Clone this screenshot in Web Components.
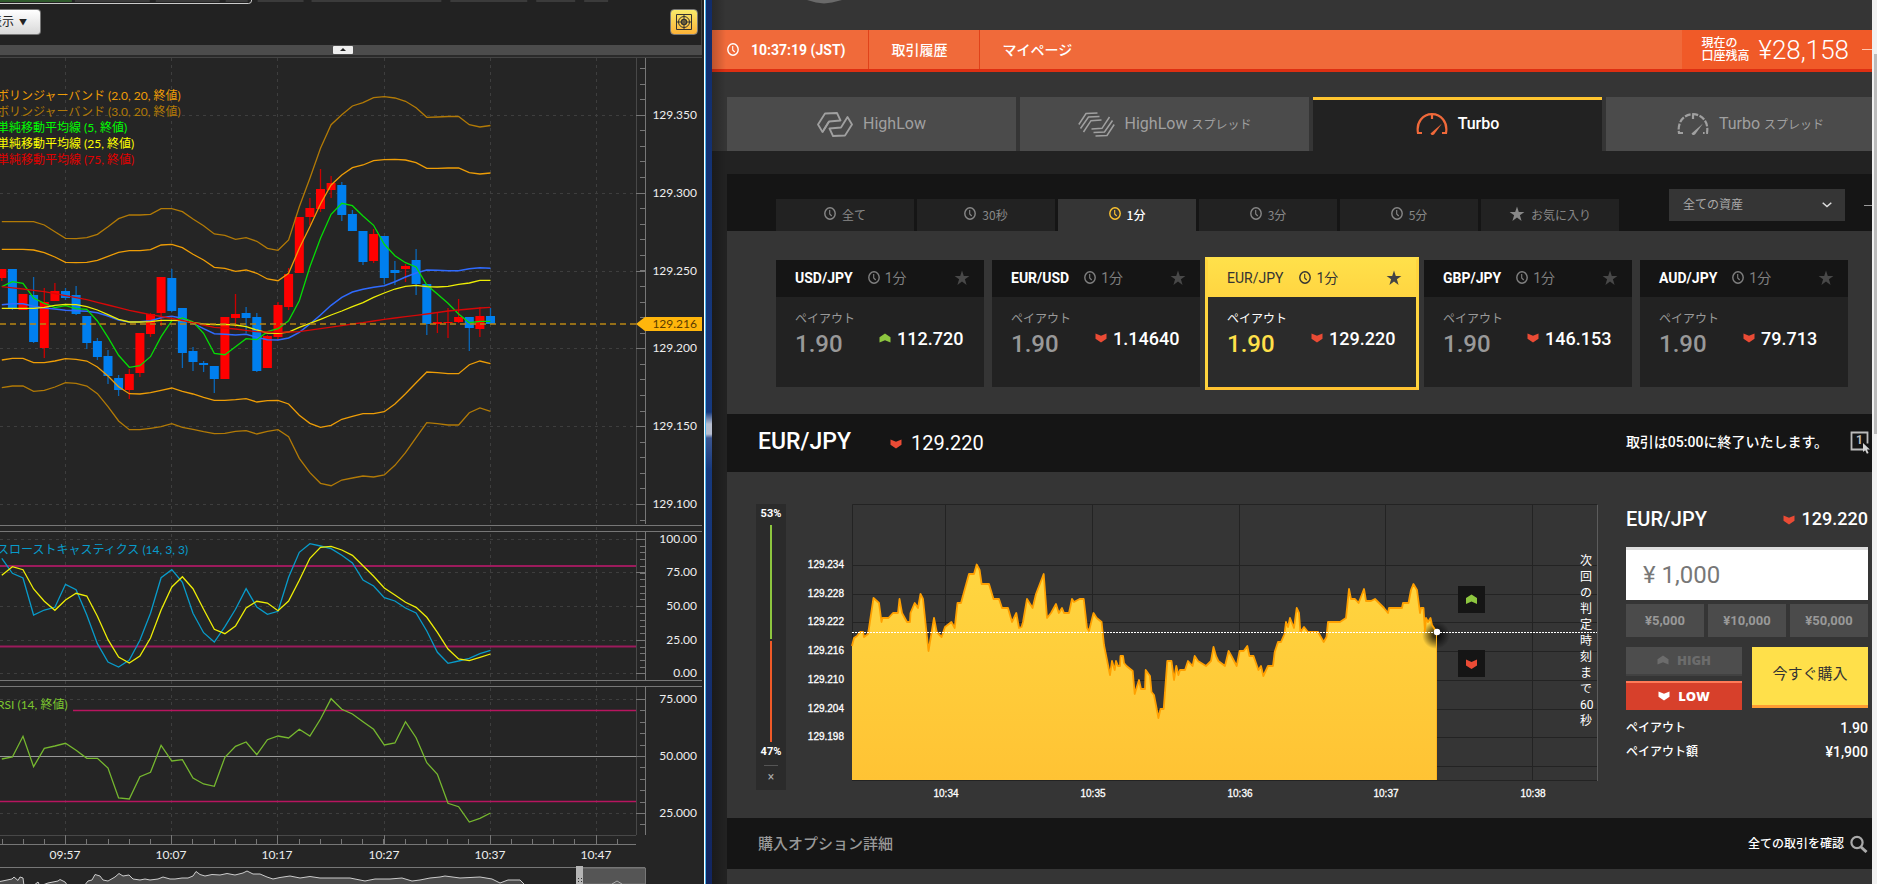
<!DOCTYPE html>
<html lang="ja">
<head>
<meta charset="utf-8">
<title>Turbo - EUR/JPY</title>
<style>
  * {
    box-sizing: border-box;
  }

  body {
    margin: 0;
    background: #222;
    color: #fff;
    font-family: Roboto, "Noto Sans CJK JP", sans-serif;
    overflow: hidden;
  }

  .desktop {
    display: grid;
    grid-template-columns: minmax(0, 702fr) 10px minmax(0, 1160fr) 5px;
    height: 100vh;
    overflow: hidden;
  }
</style>
</head>
<body>
<div class="desktop">
  <chart-window></chart-window>
  <window-edge></window-edge>
  <trade-app>
    <nav-bar balance="¥28,158">
      <nav-item icon="clock" strong>10:37:19 (JST)</nav-item>
      <nav-item>取引履歴</nav-item>
      <nav-item>マイページ</nav-item>
    </nav-bar>
    <mode-tabs>
      <mode-tab icon="highlow" name="HighLow"></mode-tab>
      <mode-tab icon="spread" name="HighLow" sub="スプレッド"></mode-tab>
      <mode-tab icon="turbo" name="Turbo" active></mode-tab>
      <mode-tab icon="turbospread" name="Turbo" sub="スプレッド"></mode-tab>
    </mode-tabs>
    <filter-bar>
      <time-tab icon="clock">全て</time-tab>
      <time-tab icon="clock">30秒</time-tab>
      <time-tab icon="clock" active>1分</time-tab>
      <time-tab icon="clock">3分</time-tab>
      <time-tab icon="clock">5分</time-tab>
      <time-tab icon="star">お気に入り</time-tab>
    </filter-bar>
    <asset-list>
      <asset-card pair="USD/JPY" price="112.720" dir="up"></asset-card>
      <asset-card pair="EUR/USD" price="1.14640" dir="down"></asset-card>
      <asset-card pair="EUR/JPY" price="129.220" dir="down" active></asset-card>
      <asset-card pair="GBP/JPY" price="146.153" dir="down"></asset-card>
      <asset-card pair="AUD/JPY" price="79.713" dir="down"></asset-card>
    </asset-list>
    <asset-title pair="EUR/JPY" price="129.220">取引は05:00に終了いたします。</asset-title>
    <trade-panel>
      <sentiment-bar high="53" low="47"></sentiment-bar>
      <rate-chart>次回の判定時刻まで60秒</rate-chart>
      <order-form pair="EUR/JPY" price="129.220"></order-form>
    </trade-panel>
    <detail-bar>購入オプション詳細</detail-bar>
  </trade-app>
  <page-scroll></page-scroll>
</div>

<script>
class BaseElement extends HTMLElement {
  constructor() {
    super();
    this.attachShadow({ mode: "open" });
  }

  connectedCallback() {
    const template = document.createElement("template");
    template.innerHTML = `
      <style>
        * { box-sizing: border-box; }
        :host { display: block; }
        button, input, select { font-family: inherit; border-radius: 0; margin: 0; }
        a { color: inherit; text-decoration: none; }
        svg { display: block; }
        ${this.getStyles()}
      </style>
      ${this.getMarkup()}
    `;
    this.shadowRoot.appendChild(template.content.cloneNode(true));
  }

  attr(name) {
    return this.getAttribute(name) || "";
  }

  getStyles() { return ""; }
  getMarkup() { return "<slot></slot>"; }
}

/* ---------- icons ---------- */

const ICONS = {
  clock: [12, 13, `<ellipse cx="6" cy="6.5" rx="5.2" ry="5.7" fill="none" stroke="currentColor" stroke-width="1.4"/><path d="M5.7 3v4l2 2" fill="none" stroke="currentColor" stroke-width="1.1"/>`],
  star: [16, 16, `<path d="M8 .6l1.8 5.3h5.6l-4.5 3.4 1.7 5.6L8 11.6l-4.6 3.3 1.7-5.6L.6 5.900h5.600z" fill="currentColor"/>`],
  up: [12, 10, `<path d="M.5 4.2 6 .4l5.500 3.800v5.400L6 7.200.5 9.600z" fill="currentColor"/>`],
  down: [12, 10, `<path d="M.5.4 6 2.800 11.500.4v5.400L6 9.600.5 5.800z" fill="currentColor"/>`],
  highlow: [36, 25, `<g fill="none" stroke="currentColor" stroke-width="1.8" stroke-linejoin="round"><path d="M5.500 20 1 12.500 8 1.500 20 1l3.500 7.500-11.500 1z"/><path d="M5.500 20 12 9.500"/><path d="M30.500 5 35 12.500 28 23.500 16 24l-3.500-7.500 11.500-1z"/></g>`],
  spread: [37, 25, `<g fill="none" stroke="currentColor" stroke-width="1.5"><path d="M.8 12.500 8 1.600 19.500.9"/><path d="M2.500 16.500 10.500 5 21.500 4.400"/><path d="M5.500 20 13 8.700 23.500 8.100"/><path d="M36.200 12.500 29 23.400 17.500 24.100"/><path d="M34.500 8.500 26.500 20 15.500 20.600"/><path d="M31.500 5 24 16.300 13.500 16.900"/></g>`],
  turbo: [32, 22, `<g fill="none" stroke="currentColor" stroke-width="2.2"><path d="M6 20H2C0 9 7 1.200 16 1.200S32 9 30 20h-4"/><path d="M16 1.500V6"/></g><path d="M14.500 20.500 26 10.500 18 21.500q-2.500 1.500-3.500-1z" fill="currentColor"/>`],
  turbospread: [32, 22, `<g fill="none" stroke="currentColor" stroke-width="2.2"><path d="M6 20H2C0 9 7 1.200 16 1.200S32 9 30 20h-4" stroke-dasharray="6 1.500"/><path d="M16 1.500V6"/></g><path d="M14.500 20.500 26 10.500 18 21.500q-2.500 1.500-3.500-1z" fill="currentColor"/>`],
  search: [18, 18, `<circle cx="7" cy="7.500" r="5.600" fill="none" stroke="currentColor" stroke-width="2.2"/><path d="M11 12l5.500 5" stroke="currentColor" stroke-width="3"/>`],
  chevron: [10, 6, `<path d="M.7.7 5 4.500 9.300.7" fill="none" stroke="currentColor" stroke-width="1.5"/>`],
  target: [16, 16, `<g fill="none" stroke="currentColor"><path d="M.5.5h15v15H.5z M8 0v16M0 8h16"/><circle cx="8" cy="8" r="5.500"/><circle cx="8" cy="8" r="2.500" stroke-width="1.5"/></g>`],
  oneclick: [22, 23, `<path d="M13 18.500H1.500v-17h16v11" fill="none" stroke="currentColor" stroke-width="1.8"/><path d="M13 12v9l2.200-1.800 1.700 3.500 1.700-.8-1.700-3.400h3z" fill="#d5d5d5"/>`]
};

class TradeIcon extends BaseElement {
  getStyles() {
    return `:host { flex: none; display: inline-block; }`;
  }

  getMarkup() {
    const [w, h, body] = ICONS[this.attr("name")];
    return `<svg width="${w}" height="${h}" viewBox="0 0 ${w} ${h}" aria-hidden="true">${body}</svg>`;
  }
}
customElements.define("trade-icon", TradeIcon);

/* ---------- left window: candle chart ---------- */

class ChartToolbar extends BaseElement {
  getStyles() {
    return `
      :host { height: 57px; background: #2a2a2a; }
      .tools {
        position: relative;
        display: flex;
        justify-content: space-between;
        align-items: flex-start;
        height: 45px;
        padding: 9px 3px 0 0;
        background: #222;
        border-right: 1px solid #444;
      }
      .tray {
        position: absolute;
        inset: 0 0 auto 0;
        width: 100%;
      }
      button {
        height: 26px;
        border: 1px solid #777;
        color: #222;
      }
      .show {
        display: flex;
        align-items: center;
        justify-content: flex-end;
        gap: 5px;
        width: 41px;
        padding: 0 13px 0 0;
        border-left: 0;
        border-radius: 0 4px 4px 0;
        background: linear-gradient(#fff, #d8d8d8);
        font-size: 12px;
        line-height: 24px;
        white-space: nowrap;
        overflow: hidden;
      }
      .show small { font-size: 8px; }
      .aim {
        display: grid;
        place-items: center;
        width: 28px;
        padding: 0;
        border-radius: 4px;
        background: linear-gradient(#f7ea6b, #fdb338);
        color: #333;
      }
      .strip {
        display: flex;
        height: 10px;
        padding-left: 47.4%;
        background: #4c4c4c;
      }
      .fold {
        width: 20px;
        height: 8px;
        margin-top: 1px;
        padding: 0;
        border: 0;
        border-radius: 1px;
        background: #eee;
        display: grid;
        place-items: center;
      }
    `;
  }

  getMarkup() {
    return `
      <div class="tools">
        <svg class="tray" height="5" viewBox="0 0 702 5" preserveAspectRatio="none">
          <path d="M0 1h72" stroke="#2f5a2c" stroke-width="2"/>
          <path d="M75 1h75M156 1h64M226 1h22M258 1h46M312 1h130M451 1h77M537 1h39M585 1h24" stroke="#555" stroke-width="1"/>
          <path d="M0 3.500h249q3 0 3-3.500" fill="none" stroke="#ccc"/>
        </svg>
        <button class="show">表示<small>▼</small></button>
        <button class="aim" aria-label="十字線"><trade-icon name="target"></trade-icon></button>
      </div>
      <div class="strip">
        <button class="fold" aria-label="折りたたむ"><svg width="6" height="4"><path d="M0 3l3-3 3 3z" fill="#222"/></svg></button>
      </div>
    `;
  }
}
customElements.define("chart-toolbar", ChartToolbar);

// bar 6 sits on the 09:57 line, ten bars per grid column
const barX = i => +(65.5 + (i - 6) * 10.625).toFixed(1);

const BANDS = {
  upper3: "221.7 221.7 221.7 221.7 225 231.7 238.3 238.7 237.7 234.3 226.7 218.7 215 215 214.3 208.7 208.7 211.7 219 225.7 234 235.3 239.3 237.7 241.3 248.3 250.3 240 206.7 178.3 148.3 124.7 114.7 106 102.7 97.7 96.7 98 101.3 107.7 117.3 117 116.5 116.5 124.7 127 125.5",
  upper2: "249.3 249.3 249.3 250 252.7 257 262.3 262.7 262.3 260.3 256.3 252.3 250.7 250.7 249.7 245 244.3 247.7 254.3 260 267.3 268.3 271.3 270 273.3 279 280.7 273.3 248.3 226.7 204 185 175 167.7 165 160.7 159.7 159.3 160 162.7 168.3 168.3 168 168 172.7 174 173",
  lower2: "360 358.3 358.3 362.7 362.7 361 358.7 359.3 361 367 376 386.7 393.7 394 392.7 390.3 388 391.3 394 397.3 400.3 400.3 399.7 398.7 402 400.7 400.3 404 415.3 423.3 427.3 425.3 419.3 416.3 413.7 413.7 411.7 404 393.7 382.7 372 372.7 373.7 373.7 364.7 361 363.7",
  lower3: "387.7 386 386 391.3 390.3 387 382.7 383.3 386 393.7 406.7 421 429.7 429.7 428.3 426.7 423.7 427.3 429.3 431.7 433.7 433.3 431.3 430.7 434 431.3 429.7 436.7 458.3 472.7 483.3 485.7 480 478 476 477 475 465.3 452.7 437.7 422.7 423.7 425 425 412.7 408 411.3",
  sma5: "286.7 281.7 283.3 298 303.3 307.7 305.7 308.7 309.3 321 337.3 355.3 367.3 365.7 356.7 336.7 320.7 318 321.7 333.3 353.3 354.7 346.7 338.7 339.7 331.7 328.7 320.7 300.7 266.7 238.3 214.3 203.3 205.7 216 225.3 244.3 255.7 262.7 267 285 294 303.3 314 322.7 321.3 321.3",
  sma25: "308.3 308.3 308.3 308.3 307.3 305.3 304.3 304.7 306.7 310 314.7 319.3 322 322 321.7 320.3 320.3 320.7 322.7 324 324.7 324.3 325 326.7 330 333 333.3 332 327.3 323.3 319.3 315 311 306.7 302.7 297.3 293 289 286.3 285.3 286.7 287 286.3 284.3 283 280.3 280.3",
  mid: "304.7 303.7 303.7 306.3 308 309 310.3 310.7 311.3 312.7 316 320 322 321.7 320.7 317.7 316.3 318.3 323.3 328.7 333.7 334.3 335 334.3 337.3 339.7 340 338 332.3 324 315 305.3 297.3 292 289.3 287.3 285.7 281.7 277 273 270 270.3 270.7 270.7 268.7 267.7 268.3",
  sma75: "286.7 287.8 289 290.3 291.7 293.7 295.7 297.7 299.7 302.3 305 307.7 310.3 312.5 314.7 316.5 318.3 320.5 322.7 325 327.3 328.2 329 330.3 331.7 332 332.3 332 331.7 330.2 328.7 327.2 325.7 324 322.7 321 319.3 318 316.7 315.3 314 312.5 311 310 309 308 307.3"
};

const OSCILLATORS = {
  k: "558.3 573.3 578 615 610 607.3 584.3 589.7 615 643.7 662 667 660 640.3 613.3 577.7 569.7 582.3 613.3 632.7 642 626.7 609.3 588.7 607 614.3 611.3 577.3 552.3 543.7 546 548.7 555.3 563 580 586 597.7 601 608 613 631 652.3 663.3 661 658.3 653.7 650.3",
  d: "575.3 566.7 569.7 589 601.3 610.3 600 593.3 596 616.3 639.7 657 663 656 638 610 587 576.7 588.7 609.3 629.3 633.7 626 608 601.3 603 610.7 601 580.3 558.3 547.3 546.3 550 555.3 565.7 576.3 588 595 602.3 607.3 617.3 632.3 649 659 660.7 657.3 654",
  rsi: "759 757 736.3 766.7 748.3 746 743.3 750.3 758.3 758.3 768 798 799 776.7 772.3 745.3 761 759.7 778 784 786.3 757.3 746.3 742 754.7 739.7 736 738 729.3 736 719 698.7 709.3 714 721.7 729.3 745 743 721.7 737.7 762.7 774.3 803.3 806.7 822 818.3 813"
};

// up?, high, top, bottom, low
const CANDLES = [
  [1,269,269,278,281],[0,269,269,308,310],[1,294,294,310,310],[0,277,295,342,343],[1,288,302,348,358],
  [1,283,291,301,301],[0,288,291,298,300],[0,286,295,314,315],[0,316,316,343,349],[0,338,341,357,360],
  [0,350,356,376,384],[0,375,378,390,396],[1,369,374,390,399],[1,333,333,373,377],[1,313,314,334,337],
  [1,277,277,313,326],[0,269,278,311,312],[0,308,308,353,368],[0,347,351,362,371],[0,361,363,365,372],
  [0,366,366,379,393],[1,317,317,379,379],[1,294,314,318,327],[0,307,313,318,333],[0,313,317,371,372],
  [1,335,336,368,368],[1,302,305,337,340],[1,268,274,307,310],[1,217,217,273,273],[1,198,208,217,225],
  [1,169,189,209,212],[1,176,183,190,198],[0,182,185,215,221],[0,210,214,231,231],[0,231,231,262,265],
  [1,229,234,261,263],[0,236,236,278,284],[0,261,270,273,285],[1,264,266,269,282],[0,249,260,284,295],
  [0,284,284,324,335],[1,312,322,324,333],[1,308,322,323,338],[1,299,317,322,323],[0,317,317,328,351],
  [1,307,316,329,337],[0,308,316,324,324]
];

const OVERVIEW = "0 881.5 12 879 14 877 18 880.5 20 877 23 878 24 886 33 886 38 882 40 886 48 883 58 881 60 879.5 65 882 68 886 84 886 88 881 92 880 95 874.5 100 876 103 880 108 881 115 877 119 873.5 123 876 129 875 133 879 140 880 145 879 150 880 158 879 163 877 170 879 175 879 182 878 188 878 193 876 196 871.5 200 874.5 205 876 212 874.5 220 875 227 873.5 235 875 243 873 247 871 253 874 260 874 267 877 273 879 280 877.5 290 876 300 878 310 876.5 320 878 335 878 350 878 365 881 375 879 390 879 402 878 412 881 420 880 430 878 440 877 445 876 460 878 480 877 492 879 500 883 508 880 520 880 526 886";

class IndicatorChart extends BaseElement {
  getStyles() {
    return `
      :host { font: 12px/16px Lato, "Noto Sans CJK JP", sans-serif; }
      svg { width: 100%; height: auto; background: #252525; }
      text { fill: #eee; }
      .axis text { text-anchor: end; }
      .time text { text-anchor: middle; }
    `;
  }

  line(values, color, width = 1.3) {
    const points = values.split(" ").map((y, i) => `${barX(i)},${y}`).join(" ");
    return `<polyline points="${points}" fill="none" stroke="${color}" stroke-width="${width}"/>`;
  }

  ticks(from, to, step) {
    let d = "";
    for (let y = from; y <= to; y += step) d += `M640 ${Math.round(y) + 0.5}h5`;
    return d;
  }

  getMarkup() {
    const grid = [115, 193, 271, 348, 426, 504, 539, 572, 606, 640, 673, 699, 813];
    const columns = [65, 171, 277, 384, 490, 596];
    const labels = [
      ["129.350", 115], ["129.300", 193], ["129.250", 271], ["129.200", 348], ["129.150", 426], ["129.100", 504],
      ["100.00", 539], ["75.00", 572], ["50.00", 606], ["25.00", 640], ["0.00", 673],
      ["75.000", 699], ["50.000", 756], ["25.000", 813]
    ];
    const times = ["09:57", "10:07", "10:17", "10:27", "10:37", "10:47"];
    let minor = "";
    for (let x = 1.5; x < 636; x += 21.22) minor += `M${Math.round(x) + 0.5} 839v5`;

    return `
      <svg viewBox="0 57 702 827" role="img" aria-label="EUR/JPY">
        <path d="M0 57.500h702" stroke="#444"/>
        <path d="${grid.map(y => `M0 ${y}.5h636`).join("")}${columns.map(x => `M${x}.5 58v778`).join("")}"
          stroke="#3e3e3e" stroke-dasharray="3 4" fill="none"/>
        <g>
          ${CANDLES.map(([up, high, top, bottom, low], i) => `
            <path d="M${barX(i)} ${high}V${low}" stroke="${up ? "#c00" : "#0a67b8"}" stroke-width="1.3"/>
            <rect x="${barX(i) - 4.5}" y="${top}" width="9" height="${bottom - top}" fill="${up ? "#f00" : "#007fef"}"/>`).join("")}
        </g>
        ${this.line(BANDS.mid, "#2f6bff", 1.5)}
        ${this.line(BANDS.upper3, "#b27a06")}
        ${this.line(BANDS.lower3, "#b27a06")}
        ${this.line(BANDS.upper2, "#ee9d06")}
        ${this.line(BANDS.lower2, "#ee9d06")}
        ${this.line(BANDS.sma5, "#05dd05")}
        ${this.line(BANDS.sma25, "#eeee05")}
        ${this.line(BANDS.sma75, "#d60808")}
        <path d="M0 324h636" stroke="#b98613" stroke-width="1.5" stroke-dasharray="6 4"/>

        <g>
          <text x="-3" y="100" style="fill:#ee9d06">ボリンジャーバンド (2.0, 20, 終値)</text>
          <text x="-3" y="116" style="fill:#b27a06">ボリンジャーバンド (3.0, 20, 終値)</text>
          <text x="-3" y="132" style="fill:#0f0">単純移動平均線 (5, 終値)</text>
          <text x="-3" y="148" style="fill:#ff0">単純移動平均線 (25, 終値)</text>
          <text x="-3" y="164" style="fill:#e00000">単純移動平均線 (75, 終値)</text>
        </g>

        <path d="M0 566h636M0 646.500h636" stroke="#9c1b5c" stroke-width="2"/>
        ${this.line(OSCILLATORS.k, "#089bca")}
        ${this.line(OSCILLATORS.d, "#eeee05")}
        <text x="-3" y="554" style="fill:#089bca">スローストキャスティクス (14, 3, 3)</text>

        <path d="M73 710.500h563M0 801.500h636" stroke="#b8155f" stroke-width="1.5"/>
        <path d="M0 756.500h645" stroke="#999"/>
        ${this.line(OSCILLATORS.rsi, "#76b82f")}
        <text x="-3" y="709" style="fill:#7cc62f">RSI (14, 終値)</text>

        <path d="M636.500 58V524M636.500 532V680M636.500 687V835M0 835.500h636" stroke="#484848" fill="none"/>
        <path d="M645.500 58V524M645.500 532V680M645.500 687V835M0 844.500h636M0 525.500h702M0 531.500h702M0 680.500h702M0 686.500h702M0 867.500h645"
          stroke="#777" fill="none"/>
        <path d="${this.ticks(68, 522, 15.57)}${this.ticks(539, 675, 6.72)}${this.ticks(699, 830, 11.4)}${minor}
          ${labels.map(([, y]) => `M636 ${y}.5h9`).join("")}${columns.map(x => `M${x}.5 835v9`).join("")}" stroke="#777" fill="none"/>
        <path d="M636 324l9-7h57v14h-57z" fill="#ffb60c"/>
        <g class="axis">
          ${labels.map(([t, y]) => `<text x="697" y="${y + 4}">${t}</text>`).join("")}
          <text x="697" y="328" style="fill:#5b3b00">129.216</text>
        </g>
        <g class="time">
          ${times.map((t, i) => `<text x="${columns[i]}" y="859">${t}</text>`).join("")}
        </g>

        <polygon points="0,886 ${OVERVIEW}" fill="#4a4a4a"/>
        <polyline points="${OVERVIEW}" fill="none" stroke="#ccc"/>
        <path d="M577 868h68.500v16H577z" fill="#555" stroke="#777"/>
        <path d="M612 884l5-3 5 3" fill="none" stroke="#aaa"/>
        <path d="M576 866h7v18h-7z" fill="#b5b5b5"/>
        <path d="M578.500 878v6M581.500 878v6" stroke="#333" stroke-dasharray="1 2"/>
      </svg>
    `;
  }
}
customElements.define("indicator-chart", IndicatorChart);

class ChartWindow extends BaseElement {
  getStyles() {
    return `:host { background: #252525; font-family: Lato, "Noto Sans CJK JP", sans-serif; overflow: hidden; }`;
  }

  getMarkup() {
    return `<chart-toolbar></chart-toolbar><indicator-chart></indicator-chart>`;
  }
}
customElements.define("chart-window", ChartWindow);

class WindowEdge extends BaseElement {
  getStyles() {
    return `
      :host {
        background:
          linear-gradient(90deg, #222 0 2px, #fff 2px 3px, #49b4ee 3px 4px, transparent 4px),
          linear-gradient(transparent 412px, #b8bfd0 424px 434px, #3a5590 438px, transparent 470px),
          linear-gradient(#112c6a, #163a80 50%, #12255f);
      }
    `;
  }

  getMarkup() { return ""; }
}
customElements.define("window-edge", WindowEdge);

class PageScroll extends BaseElement {
  getStyles() {
    return `
      :host { background: #f1f1f1; padding: 54px 0 0 2px; }
      div { height: 380px; background: #bcbcbc; }
    `;
  }

  getMarkup() { return `<div></div>`; }
}
customElements.define("page-scroll", PageScroll);

/* ---------- right window: trading page ---------- */

class TradeApp extends BaseElement {
  getStyles() {
    return `
      :host { position: relative; overflow: hidden; background: #222; }
      header { height: 30px; background: #353535; }
      header svg { margin-left: 95px; }
      .shade {
        position: absolute;
        inset: 0 auto 0 0;
        width: 14px;
        background: linear-gradient(90deg, rgba(0, 0, 0, .22), transparent);
      }
      footer { height: 60px; margin-left: 15px; background: #353535; }
    `;
  }

  getMarkup() {
    return `
      <header><svg width="35" height="4"><path d="M0 0h35l-10 2.500-8 1-8-1z" fill="#6a6a6a"/></svg></header>
      <slot></slot>
      <footer></footer>
      <div class="shade"></div>
    `;
  }
}
customElements.define("trade-app", TradeApp);

class NavItem extends BaseElement {
  getStyles() {
    return `
      :host { display: flex; border-right: 1px solid #e0421a; }
      :host(:last-of-type) { border-right: 0; }
      a {
        display: flex;
        align-items: center;
        gap: 12px;
        padding: 0 31px 0 23px;
        font-size: 14px;
        line-height: 20px;
        font-weight: 500;
      }
      :host([strong]) a { font-weight: 700; padding: 0 22px 0 15px; }
    `;
  }

  getMarkup() {
    return `<a href="#">${this.attr("icon") ? `<trade-icon name="${this.attr("icon")}"></trade-icon>` : ""}<slot></slot></a>`;
  }
}
customElements.define("nav-item", NavItem);

class NavBar extends BaseElement {
  getStyles() {
    return `
      :host {
        display: flex;
        justify-content: space-between;
        height: 42px;
        background: #f06a3a;
        border-bottom: 3px solid #de2f12;
      }
      nav { display: flex; }
      .balance {
        display: flex;
        align-items: center;
        gap: 9px;
        padding-left: 19px;
        background: #f05a28;
      }
      .label { font-size: 12px; line-height: 13px; font-weight: 500; }
      .amount { font-size: 26px; line-height: 32px; font-weight: 300; }
      .menu { width: 10px; height: 1px; margin-left: 4px; background: #ffc6ae; }
    `;
  }

  getMarkup() {
    return `
      <nav><slot></slot></nav>
      <div class="balance">
        <span class="label">現在の<br>口座残高</span>
        <span class="amount">${this.attr("balance")}</span>
        <span class="menu"></span>
      </div>
    `;
  }
}
customElements.define("nav-bar", NavBar);

class ModeTabs extends BaseElement {
  getStyles() {
    return `
      :host {
        display: grid;
        grid-template-columns: repeat(4, minmax(0, 1fr));
        gap: 4px;
        padding: 25px 0 0 15px;
        margin-right: -23px;
        background: #353535;
      }
    `;
  }
}
customElements.define("mode-tabs", ModeTabs);

class ModeTab extends BaseElement {
  getStyles() {
    return `
      a {
        display: flex;
        align-items: center;
        justify-content: center;
        gap: 10px;
        height: 54px;
        background: #4b4b4b;
        color: #a0a0a0;
        font-size: 16px;
        line-height: 20px;
      }
      small { font-size: 12px; }
      :host([active]) a { background: #222; color: #fff; border-top: 3px solid #ffc52f; border-bottom: 3px solid #222; font-weight: 500; }
      :host([active]) trade-icon { color: #f0693a; }
    `;
  }

  getMarkup() {
    const sub = this.attr("sub") ? ` <small>${this.attr("sub")}</small>` : "";
    return `<a href="#"><trade-icon name="${this.attr("icon")}"></trade-icon><span>${this.attr("name")}${sub}</span></a>`;
  }
}
customElements.define("mode-tab", ModeTab);

class FilterBar extends BaseElement {
  getStyles() {
    return `
      :host {
        display: flex;
        justify-content: space-between;
        align-items: flex-end;
        height: 57px;
        margin: 23px 0 0 15px;
        padding-left: 49px;
        background: #151515;
      }
      .tabs { display: grid; grid-template-columns: repeat(6, minmax(0, 138px)); gap: 3px; }
      .assets { display: flex; align-items: center; gap: 19px; padding-bottom: 10px; }
      .box { display: grid; align-items: center; }
      .box > * { grid-area: 1 / 1; }
      .box trade-icon { justify-self: end; margin-right: 13px; color: #ddd; pointer-events: none; }
      select {
        appearance: none;
        width: 176px;
        height: 32px;
        padding: 0 14px;
        border: 0;
        background: #353535;
        color: #aaa;
        font-size: 12px;
      }
      .menu { width: 8px; height: 1px; background: #999; }
    `;
  }

  getMarkup() {
    return `
      <div class="tabs"><slot></slot></div>
      <div class="assets">
        <div class="box">
          <select aria-label="資産"><option>全ての資産</option></select>
          <trade-icon name="chevron"></trade-icon>
        </div>
        <span class="menu"></span>
      </div>
    `;
  }
}
customElements.define("filter-bar", FilterBar);

class TimeTab extends BaseElement {
  getStyles() {
    return `
      button {
        display: flex;
        align-items: center;
        justify-content: center;
        gap: 6px;
        width: 100%;
        height: 32px;
        padding: 0;
        border: 0;
        background: #222;
        color: #888;
        font: 12px/16px "Noto Sans CJK JP", sans-serif;
      }
      trade-icon { padding-bottom: 3px; }
      :host([active]) button { background: #353535; color: #fff; font-weight: 500; }
      :host([active]) trade-icon { color: #ffc52f; }
    `;
  }

  getMarkup() {
    return `<button><trade-icon name="${this.attr("icon")}"></trade-icon><span><slot></slot></span></button>`;
  }
}
customElements.define("time-tab", TimeTab);

class AssetList extends BaseElement {
  getStyles() {
    return `
      :host {
        display: grid;
        grid-template-columns: repeat(5, minmax(0, 1fr));
        gap: 8px;
        margin-left: 15px;
        padding: 29px 24px 27px 49px;
        background: #353535;
      }
    `;
  }
}
customElements.define("asset-list", AssetList);

class AssetCard extends BaseElement {
  getStyles() {
    return `
      article { background: #222; }
      header {
        display: flex;
        align-items: center;
        height: 37px;
        padding: 0 14px 2px 19px;
        background: #151515;
        color: #808080;
        font-size: 14px;
        line-height: 20px;
      }
      h3 { margin: 0 15px 0 0; color: #fff; font-size: 14px; font-weight: 700; }
      header trade-icon { margin-right: 5px; }
      .fav { margin: 0 0 0 auto; padding: 0; border: 0; background: none; color: #484848; display: flex; }
      .fav trade-icon { margin: 0; }
      .body {
        display: grid;
        grid-template-columns: 84px 1fr;
        height: 90px;
        padding: 13px 0 0 19px;
      }
      .payout { display: grid; align-content: start; color: #999; font-size: 12px; line-height: 18px; }
      .payout strong { font-size: 24px; line-height: 32px; font-weight: 500; }
      .price {
        display: flex;
        gap: 6px;
        align-items: center;
        height: 24px;
        margin-top: 16px;
        font-size: 18px;
        font-weight: 500;
      }
      .up { color: #8dc63f; }
      .down { color: #ea4b35; }

      :host([active]) article {
        margin: -3px;
        border: 3px solid #ffd53e;
        border-top-color: #ffe04a;
        border-bottom-color: #ffc331;
        background: #2b2b2b;
      }
      :host([active]) header { background: linear-gradient(#ffe04a, #ffd541); color: #333; }
      :host([active]) h3 { color: #333; font-weight: 400; margin-right: 16px; }
      :host([active]) .fav { color: #444; }
      :host([active]) .payout { color: #fff; }
      :host([active]) .payout strong { color: #ffe04a; }
    `;
  }

  getMarkup() {
    const dir = this.attr("dir");
    return `
      <article>
        <header>
          <h3>${this.attr("pair")}</h3>
          <trade-icon name="clock"></trade-icon><span>1分</span>
          <button class="fav" aria-label="お気に入り"><trade-icon name="star"></trade-icon></button>
        </header>
        <div class="body">
          <div class="payout"><span>ペイアウト</span><strong>1.90</strong></div>
          <div class="price"><trade-icon class="${dir}" name="${dir}"></trade-icon>${this.attr("price")}</div>
        </div>
      </article>
    `;
  }
}
customElements.define("asset-card", AssetCard);

class AssetTitle extends BaseElement {
  getStyles() {
    return `
      :host {
        display: flex;
        align-items: center;
        height: 58px;
        margin-left: 15px;
        padding: 0 0 2px 31px;
        background: #151515;
      }
      h2 { margin: 0 39px 0 0; font-size: 23px; line-height: 32px; font-weight: 500; }
      .down { color: #ea4b35; margin: 4px 9px 0 0; }
      .price { font-size: 20px; line-height: 24px; padding-top: 2px; }
      .closing { margin-left: auto; font-size: 14px; line-height: 20px; font-weight: 500; }
      button { display: grid; margin-left: 22px; padding: 0; border: 0; background: none; color: #bbb; }
      button > * { grid-area: 1 / 1; }
      button span { width: 19px; font-size: 12px; line-height: 19px; font-weight: 700; text-align: center; }
    `;
  }

  getMarkup() {
    return `
      <h2>${this.attr("pair")}</h2>
      <trade-icon class="down" name="down"></trade-icon>
      <span class="price">${this.attr("price")}</span>
      <span class="closing"><slot></slot></span>
      <button aria-label="ワンクリック"><trade-icon name="oneclick"></trade-icon><span>1</span></button>
    `;
  }
}
customElements.define("asset-title", AssetTitle);

class TradePanel extends BaseElement {
  getStyles() {
    return `
      :host {
        display: grid;
        grid-template-columns: 30px minmax(0, 1fr) 20px 242px;
        align-items: start;
        margin-left: 15px;
        padding: 32px 4px 14px 29px;
        background: #353535;
      }
      ::slotted(order-form) { grid-column: 4; }
    `;
  }
}
customElements.define("trade-panel", TradePanel);

class SentimentBar extends BaseElement {
  getStyles() {
    return `
      :host {
        display: grid;
        justify-items: center;
        grid-template-rows: 21px 217px 16px 30px;
        height: 286px;
        background: #2b2b2b;
        font-size: 11px;
        line-height: 19px;
        font-weight: 700;
      }
      .bar { display: grid; gap: 2px; width: 2px; }
      .bar i:first-child { background: #8dc63f; }
      .bar i:last-child { background: #f05a28; }
      button {
        align-self: start;
        width: 14px;
        margin-top: 7px;
        padding: 4px 0 0;
        border: 0;
        border-top: 1px solid #555;
        background: none;
        color: #aaa;
        font-size: 12px;
        line-height: 14px;
      }
    `;
  }

  getMarkup() {
    const high = this.attr("high");
    const low = this.attr("low");
    return `
      <span>${high}%</span>
      <div class="bar" style="grid-template-rows: ${high}fr ${low}fr"><i></i><i></i></div>
      <span>${low}%</span>
      <button>×</button>
    `;
  }
}
customElements.define("sentiment-bar", SentimentBar);

const RATES = "852,646 854,638 857,636 860,632 863,632 864,637 868,634 869,628 873.5,598 879,603 881.5,622 882.5,618 888.5,618 893,613 898,613 899.5,599 902,613 907,622 910,622 910.5,613 914.7,603 918,608 920.5,594 923,599 925.7,625 928.5,651 934,618 936.7,632 941.6,637 945,627 951.4,622 954.7,628 957.5,603 961,603 969,574 974,574 976.7,564.5 979.6,570 981.6,584 989,584 993.5,599 999,599 1002,608 1008,608 1012,622 1016.3,613 1019,628 1021.6,627 1023,622 1027,599 1032.6,608 1036,594 1043.7,574 1047,618 1051,613 1056,604 1058.8,613 1062,608 1064,613 1069,613 1072,599 1074,602 1079.6,599 1083.7,599 1087,628 1089,631 1093.5,613 1096.7,618 1101.6,622 1104,645 1108,665 1110,675 1112,661 1114.7,670 1116,661 1118,666 1120,666 1120.5,656 1123,656 1124,663 1126.5,666 1132.7,671 1134.7,694 1139,680 1141,689 1145,689 1145.7,670 1150,676 1151.5,692 1154,695 1156.5,708 1158.4,718 1160.5,709 1163.7,709 1167.3,661 1171.5,661 1174,680 1176.3,666 1178.4,675 1180,670 1185,670 1188,661 1192.6,666 1194.7,656 1198,661 1206,666 1211,661 1213.5,647 1216,656 1218.4,661 1225,666 1228.6,651 1231.4,656 1236.7,666 1239.6,651 1243.7,651 1247.3,646 1249.4,656 1253.5,656 1258.4,670 1261,666 1263.3,676 1268,666 1273,666 1274.7,652 1278,642 1281,642 1284.5,634 1286,622 1288,627 1290,618 1294,628 1296.7,608 1299,613 1300.4,632 1304,627 1308,632 1318,632 1323.7,642 1326.5,637 1328,622 1340,622 1346,618 1349,589 1351,599 1355,599 1358.6,603 1364,589 1366,601 1371,601 1375,599 1384,608 1388,613 1389,608 1402,608 1403,603 1408.5,603 1411,590 1413.4,584 1417,590 1420,613 1421,608 1423.5,608 1425,632 1426,618 1428,622 1430.5,618 1432,625 1436.7,632";

class RateChart extends BaseElement {
  getStyles() {
    return `
      :host { position: relative; }
      svg { width: 100%; height: auto; }
      text { fill: #fff; font: 10px "Liberation Sans", Arial, sans-serif; stroke: #fff; stroke-width: .3px; }
      .next {
        position: absolute;
        top: 49px;
        right: 12px;
        width: 14px;
        font-size: 12px;
        line-height: 16px;
      }
    `;
  }

  getMarkup() {
    const rows = [565, 594, 622, 651, 680, 709, 737, 766];
    const names = ["129.234", "129.228", "129.222", "129.216", "129.210", "129.204", "129.198"];
    const columns = [945, 1092, 1239, 1385, 1532];
    return `
      <svg viewBox="786 504 820 300" role="img" aria-label="EUR/JPY">
        <defs>
          <linearGradient id="fill" x1="0" y1="0" x2="0" y2="1">
            <stop offset="0" stop-color="#ffd640"/>
            <stop offset="1" stop-color="#ffc334"/>
          </linearGradient>
          <radialGradient id="glow">
            <stop offset=".2" stop-color="#000" stop-opacity=".75"/>
            <stop offset="1" stop-color="#000" stop-opacity="0"/>
          </radialGradient>
        </defs>
        <path d="M852.500 780V504.500H1597M852 780.500h745${rows.map(y => `M852 ${y}.5h745`).join("")}${columns.map(x => `M${x}.5 504v276`).join("")}"
          fill="none" stroke="#232323"/>
        <path d="M1597.500 505v276" stroke="#5c5c5c"/>
        <polygon points="852,780 ${RATES} 1436.7,780" fill="url(#fill)"/>
        <circle cx="1436" cy="635" r="14" fill="url(#glow)"/>
        <polyline points="${RATES}" fill="none" stroke="#ffa000" stroke-width="1.8" stroke-linejoin="round"/>
        <path d="M1436.500 632v148" stroke="#ffb31f"/>
        <path d="M852 632.500h745" stroke="#fff" stroke-dasharray="2 1"/>
        <circle cx="1437" cy="632" r="3.2" fill="#fff"/>
        <path d="M1458 586h27v27h-27zM1458 650h27v27h-27z" fill="#151515"/>
        <path d="M1466 598l5.500-3.500 5.500 3.500v6l-5.500-2.500-5.500 2.500z" fill="#8dc63f"/>
        <path d="M1466 659.500l5.500 2.500 5.500-2.500v6l-5.500 3.500-5.500-3.500z" fill="#ea4b35"/>
        <g text-anchor="end">${names.map((t, i) => `<text x="844" y="${rows[i] + 3}">${t}</text>`).join("")}</g>
        <g text-anchor="middle">${columns.map((x, i) => `<text x="${x + 1}" y="797">10:3${i + 4}</text>`).join("")}</g>
      </svg>
      <div class="next"><slot></slot></div>
    `;
  }
}
customElements.define("rate-chart", RateChart);

class OrderForm extends BaseElement {
  getStyles() {
    return `
      header { display: flex; align-items: center; height: 30px; margin-bottom: 13px; }
      h3 { margin: 0 auto 0 0; font-size: 20px; line-height: 24px; font-weight: 500; }
      .down { color: #ea4b35; margin: 2px 7px 0 0; }
      .price { font-size: 18px; line-height: 24px; font-weight: 500; }
      .amount {
        display: flex;
        align-items: center;
        gap: 6px;
        height: 53px;
        padding-left: 17px;
        border-top: 3px solid #ddd;
        background: #fff;
        color: #777;
        font-size: 24px;
      }
      input { width: 100%; min-width: 0; padding: 0; border: 0; outline: 0; background: none; color: #777; font-size: 24px; }
      .chips { display: grid; grid-template-columns: repeat(3, 1fr); gap: 4px; margin: 4px 0 10px; }
      .chips button { height: 33px; padding: 0; border: 0; background: #4b4b4b; color: #999; font-size: 13px; font-weight: 700; }
      .actions { display: grid; grid-template-columns: 1fr 1fr; column-gap: 10px; align-items: start; }
      .side { display: grid; gap: 5px; }
      .side button {
        display: flex;
        align-items: center;
        justify-content: center;
        gap: 8px;
        height: 29px;
        padding: 0 0 2px;
        border: 0;
        font: 800 13px/16px "Open Sans", sans-serif;
      }
      .side .high { background: #4d4d4d; border-bottom: 2px solid #414141; color: #6c6c6c; }
      .side .low { background: #d7402b; border-top: 2px solid #ff7a58; color: #fff; }
      .buy { height: 61px; padding: 0 0 8px; border: 0; border-bottom: 3px solid #ff9c33; background: #ffe04a; color: #333; font-size: 15px; }
      dl { display: grid; grid-template-columns: 1fr auto; margin: 6px 0 0; font-size: 12px; line-height: 24px; font-weight: 500; }
      dd { margin: 0; font-size: 14px; text-align: right; }
    `;
  }

  getMarkup() {
    return `
      <header>
        <h3>${this.attr("pair")}</h3>
        <trade-icon class="down" name="down"></trade-icon>
        <span class="price">${this.attr("price")}</span>
      </header>
      <label class="amount">¥<input type="text" value="1,000" aria-label="金額"></label>
      <div class="chips"><button>¥5,000</button><button>¥10,000</button><button>¥50,000</button></div>
      <div class="actions">
        <div class="side">
          <button class="high"><trade-icon name="up"></trade-icon>HIGH</button>
          <button class="low"><trade-icon name="down"></trade-icon>LOW</button>
        </div>
        <button class="buy">今すぐ購入</button>
      </div>
      <dl>
        <dt>ペイアウト</dt><dd>1.90</dd>
        <dt>ペイアウト額</dt><dd>¥1,900</dd>
      </dl>
    `;
  }
}
customElements.define("order-form", OrderForm);

class DetailBar extends BaseElement {
  getStyles() {
    return `
      :host {
        display: flex;
        align-items: center;
        justify-content: space-between;
        height: 51px;
        margin-left: 15px;
        padding: 0 4px 0 31px;
        background: #151515;
      }
      h3 { margin: 0; color: #999; font-size: 15px; line-height: 20px; font-weight: 500; }
      a { display: flex; align-items: center; gap: 6px; font-size: 12px; line-height: 20px; font-weight: 500; }
      trade-icon { color: #aaa; }
    `;
  }

  getMarkup() {
    return `<h3><slot></slot></h3><a href="#">全ての取引を確認<trade-icon name="search"></trade-icon></a>`;
  }
}
customElements.define("detail-bar", DetailBar);
</script>
</body>
</html>
